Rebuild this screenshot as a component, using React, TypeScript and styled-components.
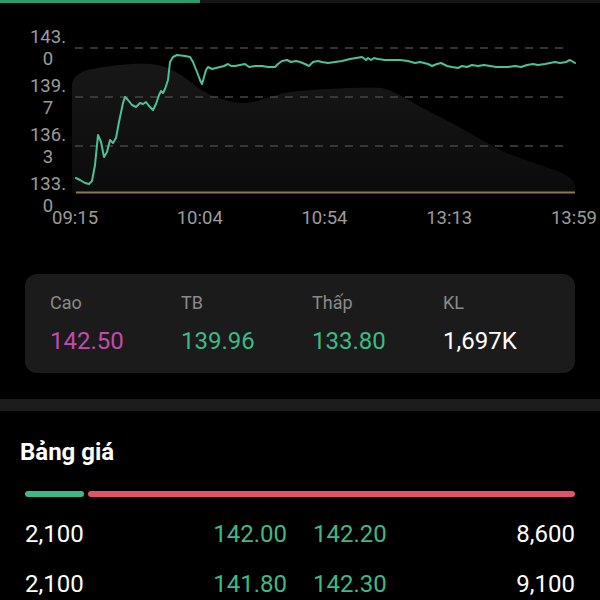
import React from 'react';
import styled, { createGlobalStyle } from 'styled-components';

const GlobalStyle = createGlobalStyle`
  html, body {
    margin: 0;
    padding: 0;
    background: #000;
  }
  body {
    font-family: Roboto, "Noto Sans", "Liberation Sans", sans-serif;
    -webkit-font-smoothing: antialiased;
  }
`;

const GREEN = '#3cba86';
const RED = '#e2536a';
const PINK = '#c24bad';

const Page = styled.div`
  width: 600px;
  height: 600px;
  overflow: hidden;
  background: #000;
  color: #fff;
`;

const TopStrip = styled.div`
  height: 3px;
  background: #161616;
  display: flex;
`;

const StripFill = styled.div`
  width: 200px;
  background: #2d9a6c;
`;

const ChartRow = styled.div`
  display: flex;
  height: 180px;
  margin-top: 24px;
`;

const YAxis = styled.div`
  width: 67px;
  flex: none;
  display: flex;
  flex-direction: column;
  align-items: flex-end;
  gap: 6px;
`;

const YLabel = styled.div`
  width: 38px;
  font-size: 18.5px;
  line-height: 21.5px;
  color: #9c9c9c;
  text-align: center;
  word-break: break-all;
`;

const Plot = styled.svg`
  display: block;
  flex: none;
`;

const XAxis = styled.div`
  display: flex;
  justify-content: space-between;
  padding: 0 3px 0 52px;
  font-size: 18.5px;
  line-height: 22px;
  color: #9c9c9c;
`;

const StatsCard = styled.div`
  margin: 45px 25px 0;
  height: 99px;
  box-sizing: border-box;
  padding: 18px 25px 0;
  background: #1b1b1b;
  border-radius: 12px;
  display: grid;
  grid-template-columns: repeat(4, 131px);
`;

const Stat = styled.div`
  display: flex;
  flex-direction: column;
`;

const StatLabel = styled.span`
  font-size: 18px;
  line-height: 22px;
  color: #8a8a8a;
  margin-bottom: 13px;
`;

const StatValue = styled.span<{ $color: string }>`
  font-size: 24px;
  line-height: 28px;
  color: ${p => p.$color};
`;

const Divider = styled.div`
  margin-top: 26px;
  height: 12px;
  background: #1c1c1c;
`;

const SectionTitle = styled.h2`
  margin: 0;
  padding: 27px 20px 0;
  font-size: 24px;
  line-height: 28px;
  font-weight: 700;
  color: #fff;
`;

const Ratio = styled.div`
  display: flex;
  gap: 4px;
  margin: 25px 25px 0;
  height: 6px;
`;

const RatioPart = styled.div<{ $color: string; $grow?: boolean }>`
  background: ${p => p.$color};
  border-radius: 3px;
  ${p => (p.$grow ? 'flex: 1;' : 'width: 59px;')}
`;

const Book = styled.div`
  margin: 12px 25px 0;
`;

const BookRow = styled.div`
  display: grid;
  grid-template-columns: 1fr auto auto 1fr;
  column-gap: 26px;
  align-items: center;
  height: 50px;
  font-size: 24px;
  line-height: 28px;
`;

const Cell = styled.span<{ $tone?: 'green' | 'white'; $align?: 'left' | 'right' }>`
  color: ${p => (p.$tone === 'green' ? GREEN : '#fff')};
  text-align: ${p => p.$align ?? 'left'};
`;

const pricePoints = [
  [76, 178], [80, 180], [85, 183], [89, 184], [92, 181], [95, 165], [98, 135], [101, 142],
  [104, 157], [107, 152], [110, 140], [113, 143], [116, 138], [119, 122], [123, 103], [125, 97],
  [128, 100], [132, 105], [136, 107], [140, 103], [143, 104], [146, 102], [149, 106], [153, 110],
  [156, 104], [159, 95], [161, 91], [163, 93], [165, 89], [168, 80], [170, 62], [173, 57],
  [177, 55], [185, 56], [190, 57], [193, 62], [197, 72], [200, 80], [202, 84], [204, 77],
  [206, 70], [208, 67], [212, 69], [216, 68], [220, 67], [224, 66], [228, 64], [231, 66],
  [235, 66], [240, 65], [245, 64], [249, 67], [255, 66], [262, 66], [268, 67], [275, 67],
  [278, 64], [282, 61], [287, 60], [291, 62], [296, 61], [300, 62], [305, 64], [309, 66],
  [313, 62], [318, 61], [322, 62], [328, 63], [335, 62], [342, 61], [350, 59], [356, 58],
  [362, 57], [366, 60], [368, 58], [371, 60], [374, 58], [378, 59], [385, 60], [392, 60],
  [400, 60], [408, 61], [415, 63], [420, 62], [428, 64], [432, 66], [437, 64], [441, 63],
  [447, 66], [452, 67], [458, 68], [462, 66], [467, 67], [472, 65], [478, 66], [484, 65],
  [490, 66], [496, 67], [502, 67], [508, 67], [515, 66], [521, 67], [527, 65], [533, 64],
  [538, 65], [545, 64], [550, 63], [555, 62], [560, 63], [566, 62], [570, 60], [575, 63],
];

const volumeArea =
  'M72,193 L72,86 C72,77 80,71 92,69 C110,66 130,63 150,64 C165,65 178,72 192,83 ' +
  'C205,94 222,101 240,103 C255,104 268,96 290,92 C320,89 355,87 382,88 ' +
  'C398,92 412,103 432,113 C455,124 478,138 502,151 C522,160 548,167 562,173 ' +
  'C570,177 575,182 575,186 L575,193 Z';

const yLabels = ['143.0', '139.7', '136.3', '133.0'];
const xLabels = ['09:15', '10:04', '10:54', '13:13', '13:59'];

const stats = [
  { label: 'Cao', value: '142.50', color: PINK },
  { label: 'TB', value: '139.96', color: GREEN },
  { label: 'Thấp', value: '133.80', color: GREEN },
  { label: 'KL', value: '1,697K', color: '#fff' },
];

const book = [
  { bidVol: '2,100', bid: '142.00', ask: '142.20', askVol: '8,600' },
  { bidVol: '2,100', bid: '141.80', ask: '142.30', askVol: '9,100' },
];

const PriceChart: React.FC = () => (
  <Plot width={533} height={180} viewBox="67 27 533 180">
    <defs>
      <linearGradient id="vol" x1="0" y1="0" x2="0" y2="1">
        <stop offset="0" stopColor="#171717" />
        <stop offset="1" stopColor="#0b0b0b" />
      </linearGradient>
    </defs>
    <path d={volumeArea} fill="url(#vol)" />
    {[48, 97, 146].map(y => (
      <line key={y} x1={75} x2={567} y1={y} y2={y} stroke="#454545" strokeWidth={1.5} strokeDasharray="8 7" />
    ))}
    <line x1={76} x2={575} y1={192.5} y2={192.5} stroke="#8d7a4b" strokeWidth={2} />
    <polyline
      points={pricePoints.map(p => p.join(',')).join(' ')}
      fill="none"
      stroke="#4cc396"
      strokeWidth={2}
      strokeLinejoin="round"
      strokeLinecap="round"
    />
  </Plot>
);

const App: React.FC = () => (
  <Page>
    <GlobalStyle />
    <TopStrip>
      <StripFill />
    </TopStrip>

    <ChartRow>
      <YAxis>
        {yLabels.map(l => (
          <YLabel key={l}>{l}</YLabel>
        ))}
      </YAxis>
      <PriceChart />
    </ChartRow>
    <XAxis>
      {xLabels.map(l => (
        <span key={l}>{l}</span>
      ))}
    </XAxis>

    <StatsCard>
      {stats.map(s => (
        <Stat key={s.label}>
          <StatLabel>{s.label}</StatLabel>
          <StatValue $color={s.color}>{s.value}</StatValue>
        </Stat>
      ))}
    </StatsCard>

    <Divider />

    <SectionTitle>Bảng giá</SectionTitle>
    <Ratio>
      <RatioPart $color={GREEN} />
      <RatioPart $color={RED} $grow />
    </Ratio>

    <Book>
      {book.map((r, i) => (
        <BookRow key={i}>
          <Cell>{r.bidVol}</Cell>
          <Cell $tone="green" $align="right">{r.bid}</Cell>
          <Cell $tone="green">{r.ask}</Cell>
          <Cell $align="right">{r.askVol}</Cell>
        </BookRow>
      ))}
    </Book>
  </Page>
);

export default App;
